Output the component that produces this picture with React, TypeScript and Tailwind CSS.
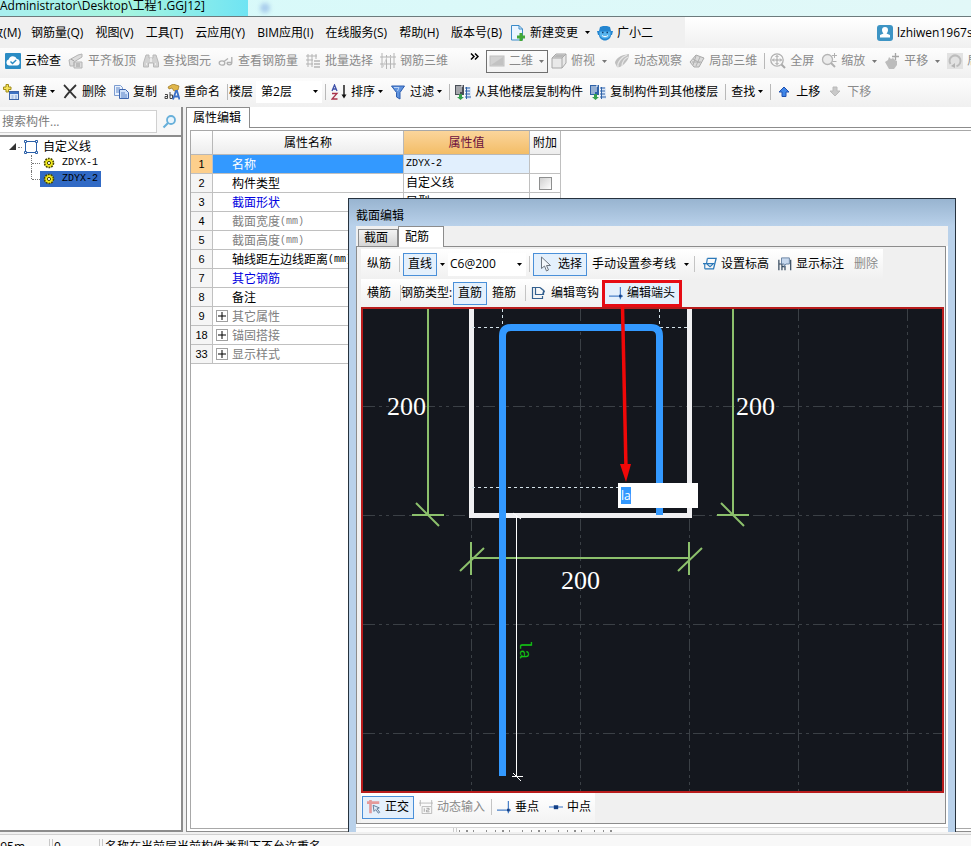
import { useEffect, useRef, type ReactNode } from 'react'
import { clsx } from 'clsx'

const MENUS = [
  '钢筋量(Q)',
  '视图(V)',
  '工具(T)',
  '云应用(Y)',
  'BIM应用(I)',
  '在线服务(S)',
  '帮助(H)',
  '版本号(B)',
]

const ROWS = [
  { no: 1, name: '名称', value: 'ZDYX-2', tone: 'selected' },
  { no: 2, name: '构件类型', value: '自定义线', check: true },
  { no: 3, name: '截面形状', value: '异型', tone: 'link' },
  { no: 4, name: '截面宽度', unit: '(mm)', tone: 'muted' },
  { no: 5, name: '截面高度', unit: '(mm)', tone: 'muted' },
  { no: 6, name: '轴线距左边线距离', unit: '(mm)' },
  { no: 7, name: '其它钢筋', tone: 'link' },
  { no: 8, name: '备注' },
  { no: 9, name: '其它属性', tone: 'muted', group: true },
  { no: 18, name: '锚固搭接', tone: 'muted', group: true },
  { no: 33, name: '显示样式', tone: 'muted', group: true },
]

/* ---------- icons ---------- */

const Svg = ({ children, size = 16 }: { children: ReactNode; size?: number }) => (
  <svg width={size} height={size} viewBox="0 0 16 16" fill="none" className="shrink-0" aria-hidden="true">
    {children}
  </svg>
)

const Caret = ({ className = 'text-black' }: { className?: string }) => (
  <svg width="5" height="3" viewBox="0 0 5 3" className={clsx('shrink-0', className)} aria-hidden="true">
    <path d="M0 0h5L2.500 3z" fill="currentColor" />
  </svg>
)

const CloudCheckIcon = () => (
  <Svg>
    <rect width="16" height="16" rx="1" fill="#2b8cc4" />
    <path d="M4 12.5a3 3 0 0 1-.3-5.9 4.3 4.3 0 0 1 8.2-.6 3.3 3.3 0 0 1 .1 6.5z" fill="#fff" />
    <path d="M5.5 8.6l2 2 3.7-3.7" stroke="#2b8cc4" strokeWidth="1.4" />
  </Svg>
)

const SlabIcon = () => (
  <Svg>
    <path d="M1 7l9-5 4-1v3L6 9v4H2zM6 9h8v6H6z" fill="#dcdcdc" stroke="#b4b4b4" />
    <path d="M3 6l3 2M8 11h4M8 13h4" stroke="#9c9c9c" />
  </Svg>
)

const BinocularsIcon = () => (
  <Svg>
    <path d="M3 2h3v3h4V2h3l2.500 8v4h-5v-4h-5v4h-5v-4z" fill="#d2d2d2" stroke="#b8b8b8" />
    <path d="M3 11h1M12 11h1M8 5v4" stroke="#f3f3f3" strokeWidth="1.500" />
  </Svg>
)

const GlassesIcon = () => (
  <Svg>
    <ellipse cx="4" cy="10" rx="2.800" ry="2.200" stroke="#b0b0b0" strokeWidth="1.300" />
    <path d="M6 8.500l4-3M9 9.500a2.400 2.400 0 0 0 4.800 0V4M9 9.500h4.500" stroke="#b0b0b0" strokeWidth="1.300" />
  </Svg>
)

const BatchIcon = () => (
  <Svg>
    <path d="M1 3h11M1 7h7M1 11h7M3 1v13M7 1v13M11 1v5" stroke="#b3b3b3" />
    <path d="M9 8h6M9 11h6M9 14h6" stroke="#959595" />
  </Svg>
)

const MeshIcon = () => (
  <Svg>
    <path d="M0 4h16M0 11h16M2 0v15M6.500 2v14M10.500 2v14M14 0v15" stroke="#b4b4b4" />
    <path d="M3 14L7 4h5" stroke="#cfcfcf" />
  </Svg>
)

const PlaneIcon = () => (
  <Svg>
    <rect x="1" y="3" width="14" height="10" fill="#d2d2d2" stroke="#c0c0c0" />
    <path d="M2 12l12-8v8z" fill="#c2c2c2" />
  </Svg>
)

const CubeIcon = () => (
  <Svg>
    <path d="M1 5l4-4h10v9l-4 5H1z" fill="#e9e9e9" stroke="#a8a8a8" />
    <path d="M1 5h10v10M11 5l4-4" stroke="#a8a8a8" />
    <path d="M2 4.500L5.500 1.500H14L11 4.500z" fill="#b8b8b8" />
  </Svg>
)

const OrbitIcon = () => (
  <Svg>
    <path d="M1 10c0-3 4-7 9-8l5-1c0 3-1 6-3 8-3 4-7 6-9 5z" fill="#bfbfbf" />
    <path d="M4 14C3 9 8 4 13 2M8 13c0-4 2-7 6-9" stroke="#e6e6e6" strokeWidth="1.300" />
  </Svg>
)

const LocalIcon = () => (
  <Svg>
    <path d="M1 9l6-7 8 3-5 9-5 0z" fill="#dadada" stroke="#a9a9a9" />
    <path d="M4 6l7 4M7 3l-3 9M11 4l-4 9M3 9l9 0" stroke="#b0b0b0" />
  </Svg>
)

const FullIcon = () => (
  <Svg>
    <circle cx="7" cy="7" r="6.200" stroke="#b0b0b0" strokeWidth="1.300" />
    <path d="M7 2.500v9M2.500 7h9M5.500 4L7 2.500 8.500 4M5.500 10L7 11.500 8.500 10M4 5.500L2.500 7 4 8.500M10 5.500L11.500 7 10 8.500" stroke="#a4a4a4" />
    <path d="M11.500 11.500L15 15" stroke="#a8a8a8" strokeWidth="2" />
  </Svg>
)

const ZoomIcon = () => (
  <Svg>
    <circle cx="6.500" cy="6.500" r="5" fill="#ebebeb" stroke="#b5b5b5" strokeWidth="1.300" />
    <path d="M10 10l4 4" stroke="#b0b0b0" strokeWidth="2" />
    <path d="M13.500 0v5M11 2.500h5M11.500 8.500h4" stroke="#b0b0b0" />
  </Svg>
)

const PanIcon = () => (
  <Svg>
    <path d="M1 9l3-2 1-3 2 2 2-1 2 2 2 1v4l-3 4H5z" fill="#bcbcbc" />
    <path d="M11.500 0v7M8 3.500h7" stroke="#a5a5a5" strokeWidth="1.300" />
  </Svg>
)

const RotateIcon = () => (
  <Svg>
    <path d="M0 0h16v16H0z" fill="#e2e2e2" />
    <path d="M3.500 11a5.500 5.500 0 1 1 6 2.200" stroke="#bcbcbc" strokeWidth="2" />
    <path d="M8 10v5l-4-2z" fill="#b4b4b4" />
  </Svg>
)

const NewIcon = () => (
  <Svg>
    <rect x="6.500" y="7.500" width="9" height="8" fill="#dbe8f8" stroke="#3c64a6" />
    <path d="M7 8h8v2H7z" fill="#3f73c4" />
    <path d="M8.500 12h2M12 12h2M8.500 14h2M12 14h2" stroke="#86a5d6" />
    <path d="M3 0.500h2.500V3H8v2.500H5.500V8H3V5.500H.5V3H3z" fill="#f7e35a" stroke="#a08c1a" />
  </Svg>
)

const CrossIcon = () => (
  <Svg>
    <path d="M2 1c3 3 7 8 12 13M14 1C10 5 6 9 2.500 14" stroke="#333" strokeWidth="1.800" />
  </Svg>
)

const CopyIcon = () => (
  <Svg>
    <path d="M1.500 1.500h6l2 2v8h-8z" fill="#eaf2fd" stroke="#7c9cd0" />
    <path d="M6.500 5.500h6l3 3v6h-9z" fill="#cfe0f8" stroke="#3e66ae" />
    <path d="M3 4h4M3 6h3M3 8h3M8 9h4M8 11h6M8 13h6" stroke="#5c85c8" />
  </Svg>
)

const RenameIcon = () => (
  <Svg>
    <path d="M4 3l5-3 6 2-1 4-4 1-2-3-3 1z" fill="#e0b64a" stroke="#9a7420" strokeWidth=".7" />
    <path d="M1 10.500h2.500v4H1v-2h2M6 8v6.500h2.500V11H6" stroke="#444" />
    <path d="M9 15.500L12 7h1l2.500 8.500M10 12.500h5" stroke="#3a70c8" strokeWidth="1.800" />
  </Svg>
)

const SortIcon = () => (
  <Svg>
    <path d="M1 7L3.500 1 6 7M2 5h3.500" stroke="#3d4fa8" strokeWidth="1.300" />
    <path d="M1 9.500h5L1 15h5.500" stroke="#a8324a" strokeWidth="1.300" />
    <path d="M13 1v11" stroke="#111" strokeWidth="1.400" />
    <path d="M10.500 10.500h5L13 14.500z" fill="#111" />
  </Svg>
)

const FilterIcon = () => (
  <Svg>
    <path d="M1.500 2h13L10 8.500V15l-3.500-2V8.500z" fill="#5f93de" stroke="#2d5daf" />
    <path d="M4 3.500h5L7.500 7" stroke="#b9d3f7" />
  </Svg>
)

const CopyFloorIcon = ({ main = '#4a4f58' }: { main?: string }) => (
  <Svg>
    <path d="M0 1h9v10H0z" fill={main} />
    <path d="M1 3h6M1 5h6M1 7h6M1 9h4M7 0v3" stroke="#fff" />
    <path d="M4 10h3v3h2l-3.500 3L2 13h2z" fill="#35a04e" />
    <path d="M11 3h5v12h-5z" fill="#dce8f8" />
    <path d="M10 4h5M10 7h5M10 10h5M10 13h6M11.500 3v12" stroke="#2f62a8" />
  </Svg>
)

const ArrowIcon = ({ down }: { down?: boolean }) => (
  <Svg>
    {down ? (
      <path d="M6 3h4v4h3l-5 5-5-5h3z" fill="#c9c9c9" stroke="#bababa" />
    ) : (
      <path d="M6 12.500h4V8h3L8 3 3 8h3z" fill="#3f86e8" stroke="#2050b0" />
    )}
  </Svg>
)

const DocPlusIcon = () => (
  <Svg>
    <path d="M1.500.5H9l3.500 3.500v11h-11z" fill="#eaf5ff" stroke="#3b8bc9" />
    <path d="M9 .5V4h3.500" stroke="#3b8bc9" />
    <path d="M9.500 8h3v2.500H15v3h-2.500V16h-3v-2.500H7v-3h2.500z" fill="#43a838" />
  </Svg>
)

const MascotIcon = () => (
  <Svg>
    <path d="M3 2l3-1h4l3 1 1 4h2l-1 4h-1c0 3-3 5.500-6 5.500S2 13 2 10H1L0 6h2z" fill="#2385d0" />
    <path d="M2.500 6.500h11V9c0 2.500-2.500 4.500-5.500 4.500S2.500 11.500 2.500 9z" fill="#57b4ee" />
    <path d="M5 7.500h1.500M9.500 7.500H11" stroke="#0d3f73" strokeWidth="1.500" />
    <path d="M5 10.500c2 1.600 4 1.600 6 0" stroke="#fff" />
  </Svg>
)

const UserIcon = () => (
  <Svg>
    <rect width="16" height="16" rx="3" fill="#3d94c4" />
    <path d="M5 5a3 3 0 1 1 6 0c0 2-1 3-1.500 3.500L13 10v2.500H3V10l3.500-1.500C6 8 5 7 5 5z" fill="#fff" />
  </Svg>
)

const GearIcon = () => (
  <svg width="12" height="12" viewBox="0 0 12 12" className="shrink-0" aria-hidden="true">
    <circle cx="6" cy="6" r="4.500" fill="#f2ea1c" stroke="#4a4600" strokeWidth="1.600" strokeDasharray="1.800 1" />
    <circle cx="6" cy="6" r="1.600" fill="#fff" stroke="#4a4600" />
  </svg>
)

const FrameIcon = () => (
  <Svg>
    <path d="M2.500 2.500h11v11h-11z" stroke="#2a5fa8" />
    <path d="M1.500 1.500h2v2h-2zM12.500 1.500h2v2h-2zM1.500 12.500h2v2h-2zM12.500 12.500h2v2h-2z" fill="#fff" stroke="#2a5fa8" />
  </Svg>
)

const CursorIcon = () => (
  <Svg>
    <path d="M3.500 1v11.500l3-2.500 2 5 2-1-2-4.500h4z" fill="#f4f8fc" stroke="#6e7680" />
  </Svg>
)

const LevelIcon = () => (
  <Svg size={14}>
    <path d="M5 1.500h10l-3 12H2" stroke="#2b78b8" strokeWidth="1.500" />
    <path d="M0 7.500h4l1-6M4 7.500h8L8 11zM2 7.500v6" stroke="#2b78b8" strokeWidth="1.300" />
  </Svg>
)

const AnnotateIcon = () => (
  <Svg size={14}>
    <path d="M1 3v12M1 8h3.500v7M4.500 11H8v4M14.500 3v12" stroke="#33475c" strokeWidth="1.400" />
    <path d="M4 1h9v7H9l-2 3V8H4z" fill="#c7d8ee" stroke="#5f7a9c" />
  </Svg>
)

const HookIcon = () => (
  <Svg>
    <path d="M4 2.500H1.500v11h10V11M4.500 2.500H9l3.500 3v4h-8z" stroke="#35618f" strokeWidth="1.200" />
    <path d="M10 3l4 3.500-3 2" stroke="#35618f" />
  </Svg>
)

const FootIcon = () => (
  <Svg size={14}>
    <path d="M0 11.500h16M13 1v14" stroke="#4a80c8" strokeWidth="1.400" />
    <path d="M11.500 10h3v3h-3z" fill="#123f86" />
  </Svg>
)

const MidIcon = () => (
  <Svg size={14}>
    <path d="M0 8h16" stroke="#5a8cd0" strokeWidth="1.400" />
    <path d="M5.500 6h5v4.500h-5z" fill="#123f86" />
  </Svg>
)

const OrthoIcon = () => (
  <Svg size={14}>
    <path d="M0 3h14M4 0v15" stroke="#e59a9a" strokeWidth="3" />
    <path d="M7 6l1 7 2-2 3 4 1.500-1L11.500 10l2.500-1z" fill="#dfeaf6" stroke="#54708f" />
  </Svg>
)

const DynInputIcon = () => (
  <Svg size={14}>
    <path d="M0 3.500h16M1.500 0v7M14.500 0v7" stroke="#b5b5b5" />
    <path d="M3.500 7.500h11v8h-11z" stroke="#b5b5b5" />
    <path d="M6 9.500v4M8.500 9.500h3v2h-3v2h3.500" stroke="#9c9c9c" />
  </Svg>
)

/* ---------- shared controls ---------- */

type ToolProps = { icon?: ReactNode; label: string; muted?: boolean; drop?: boolean; wide?: boolean }

const Tool = ({ icon, label, muted, drop, wide }: ToolProps) => (
  <button
    type="button"
    className={clsx('flex shrink-0 items-center whitespace-nowrap', wide ? 'gap-[7px]' : 'gap-[3px]', muted ? 'text-[#8a8a8a]' : 'text-black')}
  >
    <span className="flex items-center gap-1">
      {icon}
      {label}
    </span>
    {drop && <Caret className={muted ? 'text-[#777]' : 'text-black'} />}
  </button>
)

const Sep = () => <span className="-mr-0.5 h-4 w-px shrink-0 bg-[#b8b8b8]" />

const DlgButton = ({ icon, label, active, muted }: { icon?: ReactNode; label: string; active?: boolean; muted?: boolean }) => (
  <button
    type="button"
    className={clsx(
      'flex h-[23px] shrink-0 items-center gap-1 border px-1 whitespace-nowrap',
      active ? 'border-[#4a90d9] bg-[#e4f0fc]' : 'border-transparent',
      muted ? 'text-[#8a8a8a]' : 'text-black',
    )}
  >
    {icon}
    {label}
  </button>
)

const DlgSep = ({ className }: { className?: string }) => <span className={clsx('h-4 w-px shrink-0 bg-[#c4c4c4]', className)} />

/* ---------- main window ---------- */

const MenuBar = () => (
  <nav className="flex h-[31px] shrink-0 items-center justify-between overflow-hidden bg-linear-to-b from-white to-[#f0f0f0]">
    <div className="flex h-full shrink-0 items-center gap-3 bg-[#f0f0f0] pr-8">
      <button type="button" className="-mr-0.5 flex w-[21px] justify-end overflow-hidden whitespace-nowrap">
        修改(M)
      </button>
      {MENUS.map((menu) => (
        <button key={menu} type="button" className="shrink-0 whitespace-nowrap">
          {menu}
        </button>
      ))}
      <div className="-ml-1 flex gap-[7px]">
        <Tool icon={<DocPlusIcon />} label="新建变更" drop wide />
        <Tool icon={<MascotIcon />} label="广小二" />
      </div>
    </div>
    <a href="#account" className="flex w-[94px] shrink-0 items-center gap-1 whitespace-nowrap">
      <UserIcon />
      lzhiwen1967s
    </a>
  </nav>
)

const ViewToolbar = () => (
  <div className="flex h-[30px] shrink-0 items-center gap-[7px] overflow-hidden bg-linear-to-b from-[#fdfdfd] to-[#f0f0f0] pb-1 pl-[5px]">
    <Tool icon={<CloudCheckIcon />} label="云检查" />
    <Tool icon={<SlabIcon />} label="平齐板顶" muted />
    <Tool icon={<BinocularsIcon />} label="查找图元" muted />
    <Tool icon={<GlassesIcon />} label="查看钢筋量" muted />
    <Tool icon={<BatchIcon />} label="批量选择" muted />
    <Tool icon={<MeshIcon />} label="钢筋三维" muted />
    <button type="button" aria-label="更多" className="flex h-6 w-6 shrink-0 items-start justify-end pt-1">
      <svg width="9" height="7" viewBox="0 0 9 7" fill="none" aria-hidden="true">
        <path d="M1 .5l3 3-3 3M5 .5l3 3-3 3" stroke="#000" strokeWidth="1.500" />
      </svg>
    </button>
    <button type="button" className="flex h-[23px] w-[62px] shrink-0 items-center gap-1 border border-[#707070] pl-0.5 text-[#8a8a8a]">
      <PlaneIcon />
      二维
      <Caret className="ml-0.5 text-[#777]" />
    </button>
    <div className="-ml-1 flex items-center gap-[7px]">
      <Tool icon={<CubeIcon />} label="俯视" muted drop wide />
      <Tool icon={<OrbitIcon />} label="动态观察" muted />
      <Tool icon={<LocalIcon />} label="局部三维" muted />
      <Sep />
      <Tool icon={<FullIcon />} label="全屏" muted />
      <Tool icon={<ZoomIcon />} label="缩放" muted drop wide />
      <Tool icon={<PanIcon />} label="平移" muted drop wide />
      <Tool icon={<RotateIcon />} label="局部" muted />
    </div>
  </div>
)

const EditToolbar = () => (
  <div className="flex h-[29px] shrink-0 items-center gap-[7px] overflow-hidden bg-linear-to-b from-[#fdfdfd] to-[#f0f0f0] pb-0.5 pl-[3px]">
    <Tool icon={<NewIcon />} label="新建" drop />
    <Tool icon={<CrossIcon />} label="删除" />
    <Tool icon={<CopyIcon />} label="复制" />
    <Tool icon={<RenameIcon />} label="重命名" />
    <Sep />
    <div className="-mx-1 flex shrink-0 items-center gap-[3px]">
      <label htmlFor="floor">楼层</label>
      <div className="relative flex items-center">
        <select id="floor" className="h-[22px] w-[66px] appearance-none bg-white pl-[5px]">
          <option>第2层</option>
        </select>
        <span className="pointer-events-none absolute right-1">
          <Caret />
        </span>
      </div>
    </div>
    <Sep />
    <Tool icon={<SortIcon />} label="排序" drop />
    <Tool icon={<FilterIcon />} label="过滤" drop />
    <Sep />
    <Tool icon={<CopyFloorIcon />} label="从其他楼层复制构件" />
    <Tool icon={<CopyFloorIcon main="#2f62a8" />} label="复制构件到其他楼层" />
    <Sep />
    <Tool label="查找" drop />
    <Sep />
    <Tool icon={<ArrowIcon />} label="上移" />
    <Tool icon={<ArrowIcon down />} label="下移" muted />
  </div>
)

const ComponentTree = () => (
  <aside className="flex w-[183px] shrink-0 flex-col border-r-2 border-b-2 border-[#8c8c8c]">
    <div className="flex h-[30px] shrink-0 items-center border-b-2 border-[#8c8c8c] bg-[#f7f7f7]">
      <input
        aria-label="搜索构件"
        placeholder="搜索构件..."
        className="h-[23px] w-[157px] border border-l-0 border-[#d0d0d0] bg-white pl-0.5 placeholder:text-[#7a7a7a]"
      />
      <button type="button" aria-label="搜索" className="ml-1">
        <Svg>
          <circle cx="10" cy="7" r="4" fill="#e8f4fc" stroke="#68b0da" strokeWidth="1.800" />
          <path d="M7 10l-4.500 4.500" stroke="#68b0da" strokeWidth="2.200" />
        </Svg>
      </button>
    </div>
    <ul className="flex-1 bg-white pt-0.5 leading-4">
      <li>
        <div className="flex h-4 items-center pl-[9px]">
          <svg width="8" height="8" viewBox="0 0 8 8" aria-hidden="true">
            <path d="M7 0v7H0z" fill="#333" />
          </svg>
          <span className="mx-px w-1 border-t border-dotted border-[#888]" />
          <FrameIcon />
          <span className="ml-1">自定义线</span>
        </div>
        <ul className="ml-[31px] font-['Liberation_Mono',monospace] text-[10px]">
          {['ZDYX-1', 'ZDYX-2'].map((name, i) => (
            <li key={name} className="flex h-4">
              <span className={clsx('w-px border-l border-dotted border-[#777]', i ? 'h-2' : 'h-4')} />
              <span className="mt-2 w-2 border-t border-dotted border-[#777]" />
              <span className={clsx('flex items-center gap-[7px] px-[3px]', i === 1 && 'bg-[#316ac5]')}>
                <GearIcon />
                {name}
              </span>
            </li>
          ))}
        </ul>
      </li>
    </ul>
  </aside>
)

const PropertyGrid = () => (
  <table className="w-[370px] table-fixed border-separate border-spacing-0 leading-4">
    <colgroup>
      <col className="w-[22px]" />
      <col className="w-[191px]" />
      <col className="w-[126px]" />
      <col className="w-[31px]" />
    </colgroup>
    <thead>
      <tr className="h-6 bg-linear-to-b from-white to-[#ececec] *:border-r *:border-b *:border-[#b8b8b8] *:p-0 *:font-normal">
        <th />
        <th>属性名称</th>
        <th className="bg-linear-to-b from-[#fbd59b] to-[#f3bd66] text-[#6b0f3c]">属性值</th>
        <th>附加</th>
      </tr>
    </thead>
    <tbody>
      {ROWS.map((row) => (
        <tr key={row.no} className="h-[19px] *:h-[19px] *:border-r *:border-b *:border-[#c0c0c0] *:p-0">
          <td className={clsx("text-center font-['Liberation_Sans',sans-serif] text-[11px]", row.no === 1 ? 'bg-[#fdcf8c]' : 'bg-[#f5f5f5]')}>
            {row.no}
          </td>
          <td
            className={clsx(
              'overflow-hidden whitespace-nowrap',
              row.tone === 'selected' && 'bg-[#3399ff] text-white',
              row.tone === 'link' && 'text-[#0000e0]',
              row.tone === 'muted' && 'text-[#808080]',
            )}
          >
            <div className="flex h-[18px] items-center pt-0.5">
              <span className="flex w-[19px] pl-[3px]">
                {row.group && (
                  <button type="button" aria-label="展开" className="mb-0.5 size-3 border border-[#a0a0a0] bg-white text-black">
                    <svg width="10" height="10" viewBox="0 0 10 10" aria-hidden="true">
                      <path d="M5 1v8M1 5h8" stroke="currentColor" />
                    </svg>
                  </button>
                )}
              </span>
              {row.name}
              {row.unit && <span className="font-['Liberation_Mono',monospace] text-[10px]">{row.unit}</span>}
            </div>
          </td>
          <td className={clsx(row.no === 1 && "bg-[#e1effd] font-['Liberation_Mono',monospace] text-[10px]")}>
            <span className="pl-0.5">{row.value}</span>
          </td>
          <td>
            {row.check && (
              <input
                type="checkbox"
                aria-label="附加"
                className="mx-auto block size-[13px] appearance-none border border-[#8e8f8f] bg-linear-to-br from-[#d0d0d0] to-white"
              />
            )}
          </td>
        </tr>
      ))}
    </tbody>
  </table>
)

const PropertyPanel = () => (
  <main className="ml-[3px] flex min-w-0 flex-1 flex-col">
    <div className="flex h-[21px] shrink-0 bg-white" role="tablist">
      <button type="button" role="tab" aria-selected className="w-16 border-t border-r border-l border-[#8c8c8c] bg-white text-left">
        <span className="pl-1.5">属性编辑</span>
      </button>
      <span className="flex-1 border-b border-[#8c8c8c]" />
    </div>
    <div className="flex flex-1 flex-col border-b border-l border-[#8c8c8c] bg-white pt-0.5 pb-0.5 pl-[3px]">
      <div className="flex-1 border-t border-b border-l border-[#a8a8a8]">
        <PropertyGrid />
      </div>
    </div>
  </main>
)

/* ---------- section editor ---------- */

const GRID_X = [108, 217, 326, 435, 544]
const GRID_Y = [97, 206, 315, 424]

const SectionCanvas = () => {
  const input = useRef<HTMLInputElement>(null)

  useEffect(() => {
    input.current?.focus({ preventScroll: true })
    input.current?.select()
  }, [])

  return (
    <div className="relative min-h-0 flex-1 border-2 border-[#b81c1c] bg-[#14171e]">
      <svg className="absolute inset-0 size-full overflow-visible" fill="none" shapeRendering="crispEdges">
        <g stroke="#3b4046" strokeDasharray="12 4 3 4 3 4">
          {GRID_X.map((x) => (
            <line key={x} x1={x + 0.5} x2={x + 0.5} y1="0" y2="100%" />
          ))}
          {GRID_Y.map((y) => (
            <line key={y} y1={y + 0.5} y2={y + 0.5} x1="0" x2="100%" />
          ))}
        </g>

        {/* section outline with cover lines */}
        <path d="M108.500 0V206.500H326.500V0" stroke="#f0f0f2" strokeWidth="5" />
        <path d="M109 18.500H139M297 18.500H326M139.500 0V18M296.500 0V18M109 178.500H256" stroke="#d5e3ea" strokeDasharray="3 3" />

        {/* dimensions */}
        <g stroke="#8cc06c" strokeWidth="2">
          <path d="M65 0V206M49 206H81M370 0V206M354 206H386" />
          <path d="M108 249H326M108 233V266M326 233V266" />
          <path d="M53 194L76 217M358 194L381 217M97 262L121 239M315 262L339 239" shapeRendering="auto" />
        </g>
        <g fill="#fff" className="font-['Liberation_Serif',serif] text-[26px]">
          <text x="24" y="106">200</text>
          <text x="373" y="106">200</text>
          <text x="198" y="280">200</text>
        </g>

        {/* rebar */}
        <path d="M139.500 467V27q0-8.500 8.500-8.500H288q8.500 0 8.500 8.500V206" stroke="#3399ff" strokeWidth="7" shapeRendering="auto" />
        <path d="M153.500 207V468M149 467.500H160" stroke="#fff" />
        <path d="M150 204l8 6M150 464l8 8" stroke="#fff" shapeRendering="auto" />
        <text transform="translate(157 331) rotate(90)" fill="#12c412" className="font-['Liberation_Mono',monospace] text-[16px]">
          la
        </text>

        <g shapeRendering="auto">
          <path d="M259.500-3L263 160" stroke="#f00808" strokeWidth="3.500" />
          <path d="M257 155h11l-5 18z" fill="#f00808" />
        </g>
      </svg>
      <input
        ref={input}
        aria-label="端头长度"
        defaultValue="la"
        className="absolute top-[174px] left-[255px] h-[25px] w-20 bg-white px-[3px] outline-none selection:bg-[#3399ff] selection:text-white"
      />
    </div>
  )
}

const SectionDialog = () => (
  <section
    role="dialog"
    aria-label="截面编辑"
    className="absolute top-[198px] right-[15px] bottom-3.5 left-[348px] flex flex-col border border-b-0 border-[#26323e] bg-[#b9d1ea] px-[7px]"
  >
    <header className="-mx-[7px] flex h-[27px] shrink-0 items-center bg-linear-to-b from-[#98b4d0] to-[#b9d1ea] px-[7px] pt-1.5">
      截面编辑
    </header>
    <div className="flex h-5 shrink-0 items-end border-t border-[#f0f0f0] bg-[#f0f0f0] pl-0.5" role="tablist">
      <button type="button" role="tab" className="h-[17px] w-10 border border-b-0 border-[#8c8c8c] bg-linear-to-b from-[#f4f4f4] to-[#d5d5d5] pr-1 leading-4">
        截面
      </button>
      <button type="button" role="tab" aria-selected className="z-10 -mb-px h-[21px] w-[46px] border border-b-0 border-[#8c8c8c] bg-white pr-2 leading-4">
        配筋
      </button>
    </div>
    <div className="flex min-h-0 flex-1 flex-col bg-white pr-0.5">
      <div className="flex min-h-0 flex-1 flex-col border border-[#8c8c8c] bg-[#f0f0f0] pt-0.5 pr-px pl-1">
        <div className="flex h-[30px] w-[522px] shrink-0 items-center gap-[3px] bg-linear-to-b from-white to-[#f0f0f0] pl-px">
          <DlgButton label="纵筋" />
          <DlgSep />
          <DlgButton label="直线" active />
          <Caret />
          <div className="relative flex items-center">
            <select aria-label="纵筋规格" className="h-[23px] w-[78px] appearance-none bg-white pl-0.5">
              <option>C6@200</option>
            </select>
            <span className="pointer-events-none absolute right-1">
              <Caret />
            </span>
          </div>
          <DlgSep />
          <DlgButton icon={<CursorIcon />} label="选择" active />
          <button type="button" className="flex shrink-0 items-center gap-2 px-0.5 whitespace-nowrap">
            手动设置参考线
            <Caret />
          </button>
          <DlgSep />
          <DlgButton icon={<LevelIcon />} label="设置标高" />
          <span className="-ml-1 flex">
            <DlgButton icon={<AnnotateIcon />} label="显示标注" />
            <DlgButton label="删除" muted />
          </span>
        </div>
        <div className="flex h-7 w-[318px] shrink-0 items-center bg-linear-to-b from-white to-[#f0f0f0] pl-px">
          <DlgButton label="横筋" />
          <DlgSep className="ml-1" />
          <span className="w-[52px] shrink-0 whitespace-nowrap">钢筋类型:</span>
          <DlgButton label="直筋" active />
          <DlgButton label="箍筋" />
          <DlgSep className="ml-1" />
          <DlgButton icon={<HookIcon />} label="编辑弯钩" />
          <span className="flex outline-3 -outline-offset-1 outline-[#e60c14]">
            <DlgButton icon={<FootIcon />} label="编辑端头" active />
          </span>
        </div>
        <SectionCanvas />
        <div className="flex h-[30px] w-[234px] shrink-0 items-center bg-linear-to-b from-white to-[#f3f3f3] pb-0.5 pl-px">
          <DlgButton icon={<OrthoIcon />} label="正交" active />
          <DlgButton icon={<DynInputIcon />} label="动态输入" muted />
          <DlgSep className="ml-px" />
          <DlgButton icon={<FootIcon />} label="垂点" />
          <DlgButton icon={<MidIcon />} label="中点" />
        </div>
      </div>
      <div className="-mr-0.5 h-2 shrink-0 border-t-3 border-white bg-[#fbfbfb]">
        <div className="flex h-[5px] items-end border-t border-[#d5d5d5] pl-[97px]">
          <span className="h-1 w-1 border-x border-[#ccc]" />
          <svg width="160" height="2" aria-hidden="true">
            <path d="M2 1H160" stroke="#222" strokeDasharray="1 6 2 5 1 12 1 8" />
          </svg>
        </div>
      </div>
    </div>
  </section>
)

export default function App() {
  return (
    <div className="relative flex h-screen flex-col overflow-hidden bg-[#f0f0f0] font-['Open_Sans','Noto_Sans_CJK_SC',sans-serif] text-xs leading-4 text-black">
      <header className="flex h-[17px] shrink-0 items-center border-b border-[#6d7b7d] bg-linear-to-r from-[#d5fafa] to-[#e2f8f8]">
        <h1 className="flex h-full w-[248px] items-start bg-linear-to-r from-[#a9eff0] via-[#a6f5df] to-[#6fe4f3] leading-3 whitespace-nowrap">
          Administrator\Desktop\工程1.GGJ12]
        </h1>
        <span className="ml-3 size-2.5 rounded-full bg-[#a9cdec] blur-[2px]" />
      </header>
      <MenuBar />
      <ViewToolbar />
      <EditToolbar />
      <div className="flex min-h-0 flex-1 pb-0.5">
        <ComponentTree />
        <PropertyPanel />
      </div>
      <footer className="flex h-3 shrink-0 overflow-hidden border-t border-[#d0d0d0] bg-[#f8f8f8] pt-1 whitespace-nowrap">
        <span className="flex w-[50px] justify-end border-r border-[#c8c8c8] pr-6">7.95m</span>
        <span className="ml-0.5 w-12 border-r border-l border-[#c8c8c8] pl-px">0</span>
        <span className="ml-0.5 flex-1 border-l border-[#c8c8c8] pl-0.5">名称在当前层当前构件类型下不允许重名</span>
      </footer>
      <SectionDialog />
    </div>
  )
}
